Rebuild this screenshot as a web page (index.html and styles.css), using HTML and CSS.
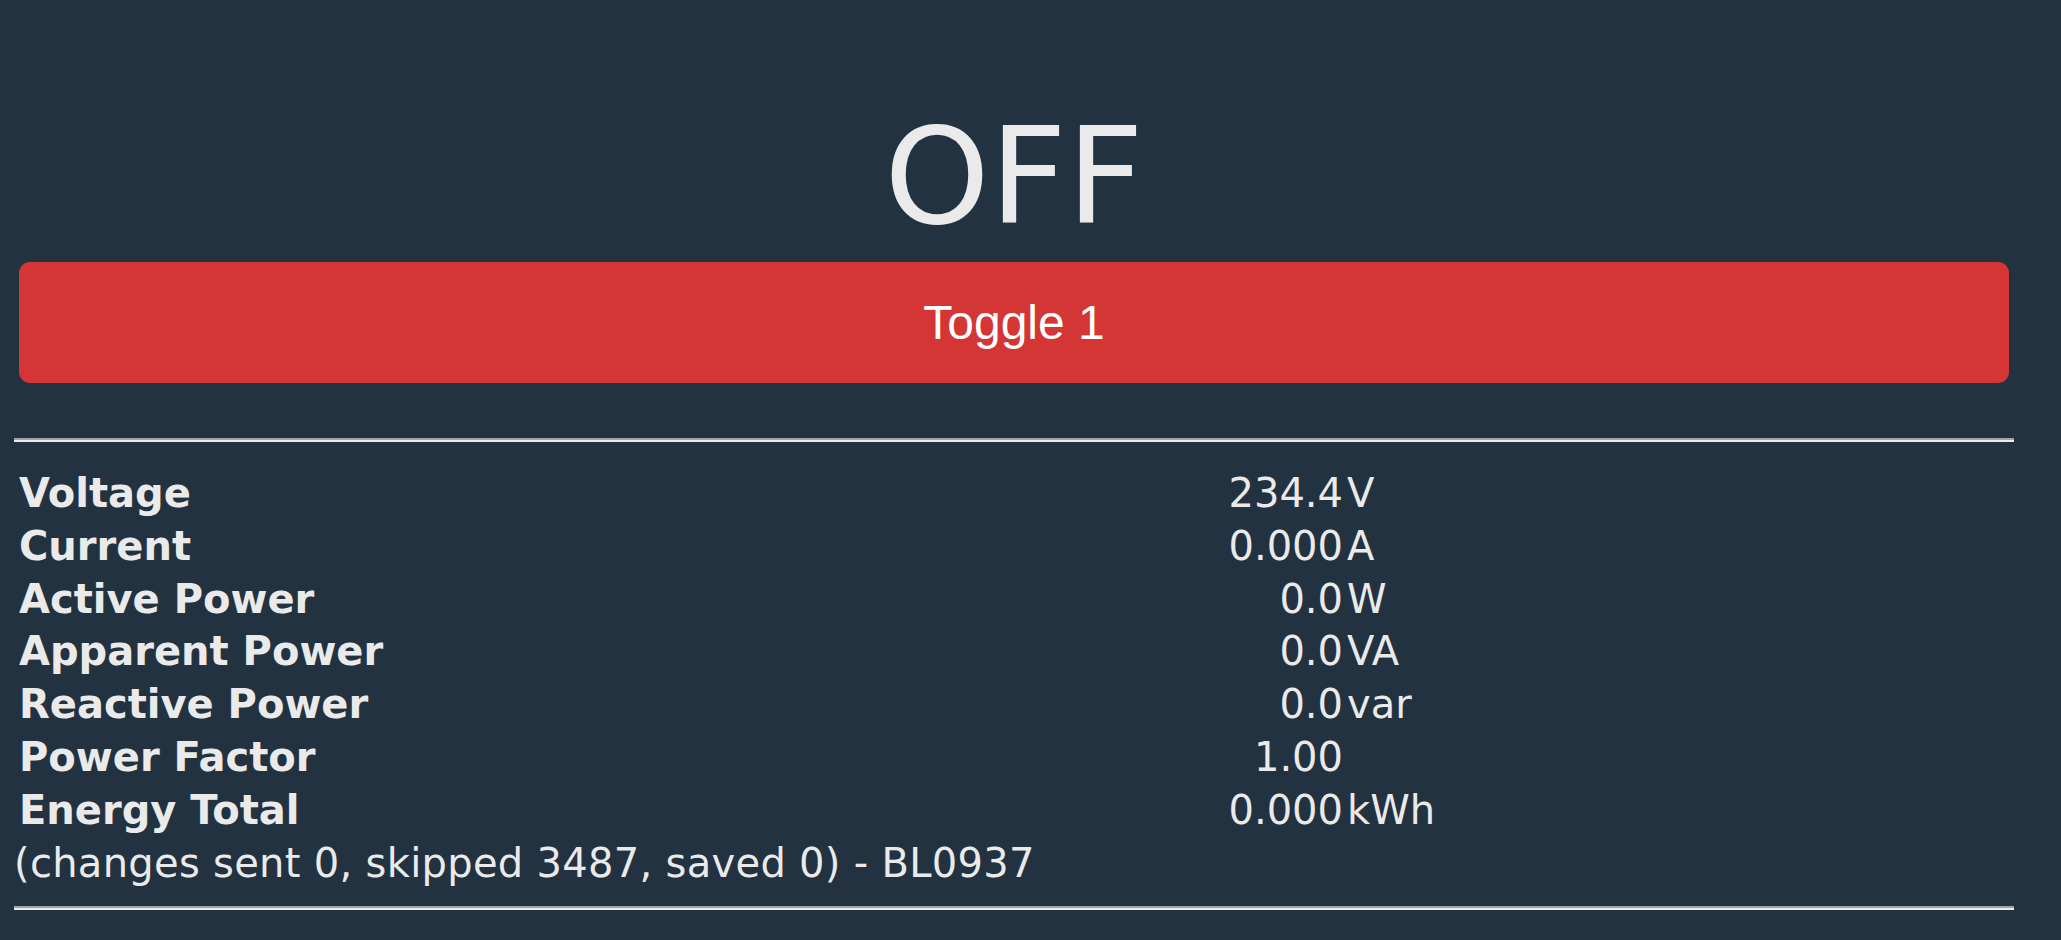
FILE: index.html
```html
<!DOCTYPE html>
<html lang="en">
<head>
    <meta charset="UTF-8">
    <meta name="viewport" content="width=device-width, initial-scale=1.0">
    <title>Tasmota - Main Menu</title>
    <link rel="stylesheet" href="styles.css">
</head>
<body>
    <div id="main-container">
        <!-- Relay state -->
        <div class="state" id="state1">OFF</div>
        <button class="toggle bred" id="toggle1">Toggle 1</button>

        <hr>

        <!-- Energy readings -->
        <div class="readings">
            <div class="row"><span class="label">Voltage</span><span class="value">234.4</span><span class="unit">V</span></div>
            <div class="row"><span class="label">Current</span><span class="value">0.000</span><span class="unit">A</span></div>
            <div class="row"><span class="label">Active Power</span><span class="value">0.0</span><span class="unit">W</span></div>
            <div class="row"><span class="label">Apparent Power</span><span class="value">0.0</span><span class="unit">VA</span></div>
            <div class="row"><span class="label">Reactive Power</span><span class="value">0.0</span><span class="unit">var</span></div>
            <div class="row"><span class="label">Power Factor</span><span class="value">1.00</span><span class="unit"></span></div>
            <div class="row"><span class="label">Energy Total</span><span class="value">0.000</span><span class="unit">kWh</span></div>
        </div>
        <div class="status">(changes sent 0, skipped 3487, saved 0) - BL0937</div>

        <hr>
    </div>

    <script>
        // Flip the relay state when the button is pressed
        document.getElementById('toggle1').addEventListener('click', function () {
            const state = document.getElementById('state1');
            state.textContent = state.textContent === 'OFF' ? 'ON' : 'OFF';
        });
    </script>
</body>
</html>
```

FILE: styles.css
```css
body {
    margin: 0;
    background-color: #223240;
    color: #eaeaea;
    font-family: "DejaVu Sans", Verdana, sans-serif;
}
#main-container {
    padding: 99px 47px 0 14px;
}
.state {
    height: 156px;
    font-size: 134px;
    line-height: 156px;
    text-align: center;
}
.toggle {
    display: block;
    width: calc(100% - 10px);
    height: 121px;
    margin: 7px 5px 0;
    padding: 0;
    border: none;
    border-radius: 11px;
    color: #fff;
    font-family: "Liberation Sans", Arial, sans-serif;
    font-size: 48px;
    cursor: pointer;
}
.bred { background-color: #d43535; }
.bred:hover { background-color: #931f1f; }
hr {
    height: 0;
    margin: 55px 0 0;
    border: none;
    border-top: 2px solid #a3a3a3;
    border-bottom: 2px solid #ececec;
}
.readings {
    margin-top: 25px;
    padding-left: 5px;
    font-size: 40px;
    line-height: 52.8px;
}
.row {
    display: grid;
    grid-template-columns: 1193px 131px 1fr;
}
.label { font-weight: bold; }
.value { text-align: right; }
.unit { padding-left: 4px; }
.status {
    font-size: 40px;
    line-height: 52.8px;
    letter-spacing: 0.3px;
}
.status + hr { margin-top: 17px; }
```
